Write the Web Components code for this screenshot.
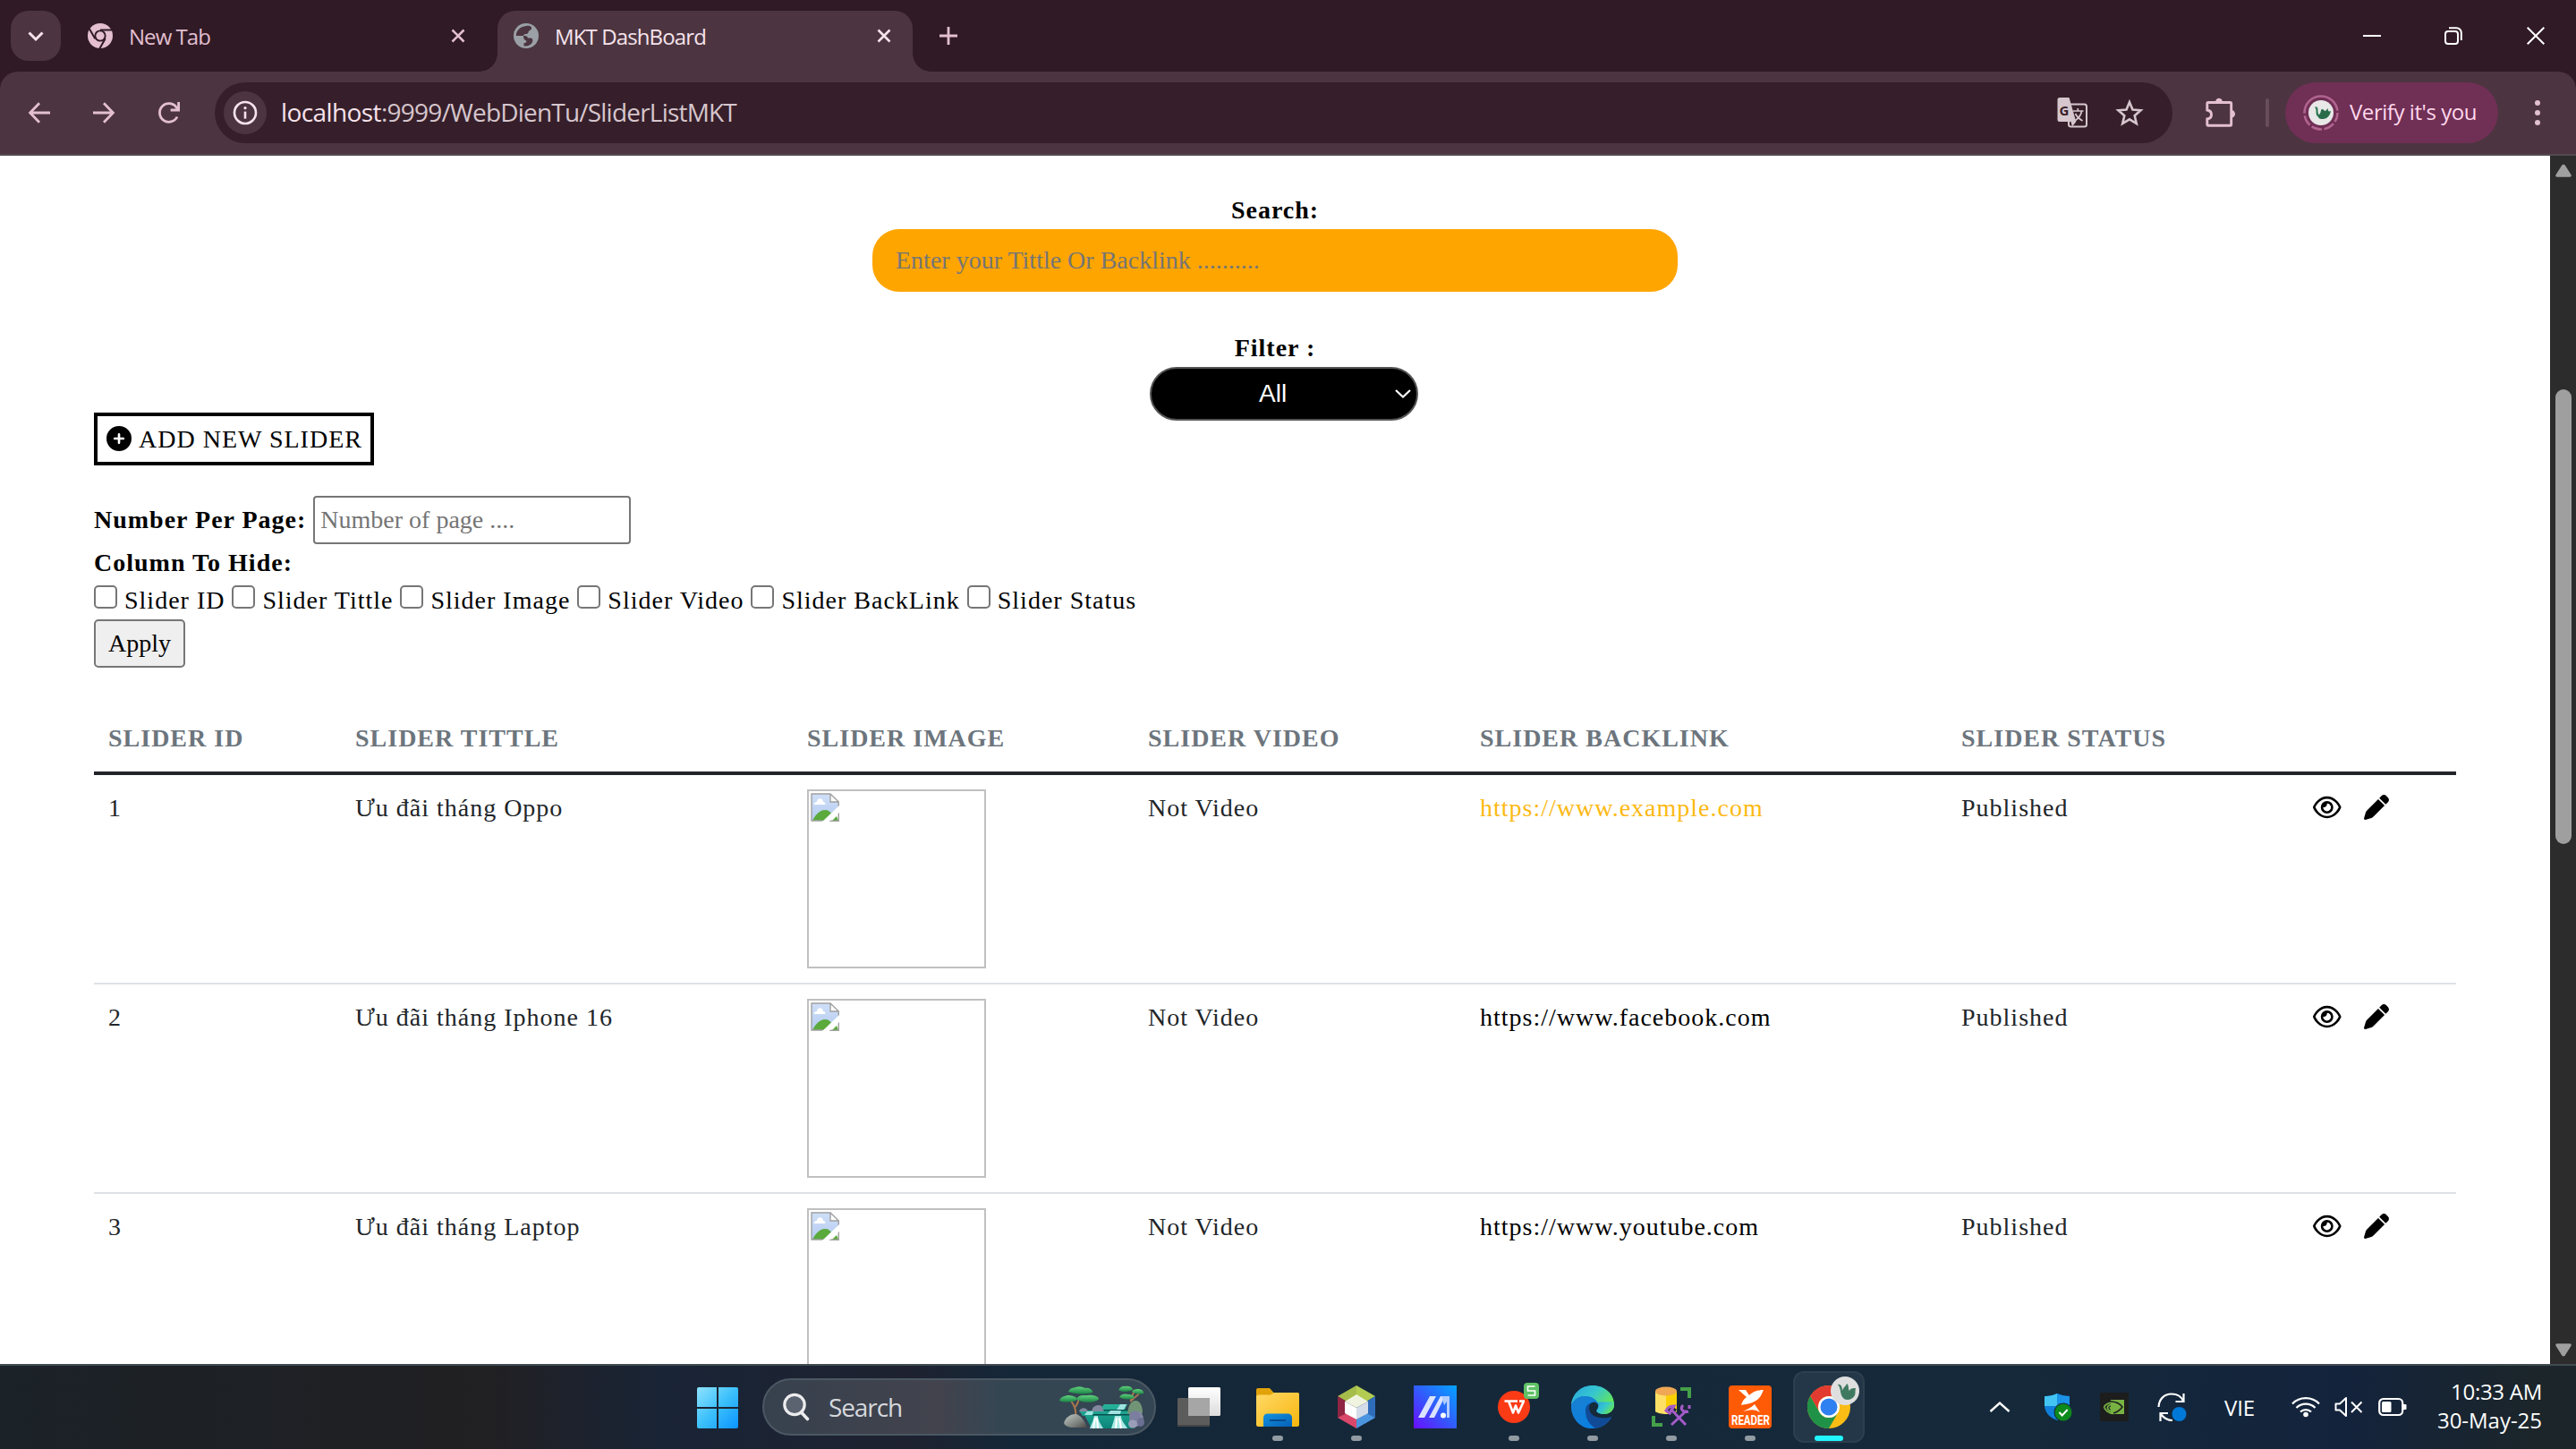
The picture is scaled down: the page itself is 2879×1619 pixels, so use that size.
<!DOCTYPE html>
<html lang="vi">
<head>
<meta charset="utf-8">
<title>MKT DashBoard</title>
<style>
html,body{margin:0;height:100%;overflow:hidden;background:#fff}
body{font-family:"Open Sans","Noto Sans",sans-serif}
</style>
</head>
<body>
<desktop-screen></desktop-screen>
<script>
const define = (tag, html, setup) => {
  const tpl = document.createElement('template');
  tpl.innerHTML = html;
  customElements.define(tag, class extends HTMLElement {
    constructor() {
      super();
      this.attachShadow({mode: 'open'}).appendChild(tpl.content.cloneNode(true));
    }
    connectedCallback() { if (setup) setup.call(this, this.shadowRoot); }
  });
};

/* Single line label; "w" is the advance the letters are tracked to. */
define('ui-text', `<style>:host{display:block;white-space:pre;flex:none}span{display:inline-block}</style><span><slot></slot></span>`, function (root) {
  const w = +this.getAttribute('w');
  if (!w) return;
  const s = root.querySelector('span');
  const n = this.textContent.length;
  const nat = s.getBoundingClientRect().width;
  s.style.letterSpacing = ((w - nat) / n).toFixed(3) + 'px';
});

const ICONS = {
  chevDown: [56,56,'<path d="M20.500 24.500l7.500 7.500 7.500-7.500" fill="none" stroke="#f6e3ec" stroke-width="3"/>'],
  chromeMono: [28,28,'<circle cx="14" cy="14" r="14" fill="#e3bfd0"/><circle cx="14" cy="14" r="6.6" fill="#301a25"/><circle cx="14" cy="14" r="4.7" fill="#e3bfd0"/><path d="M14 7.4H27M8.3 17.3L1.8 6M19.7 17.3L13.2 28.5" stroke="#301a25" stroke-width="2"/>'],
  globe: [28,28,'<circle cx="14" cy="14" r="14" fill="#9aa0a6"/><path d="M14 3c3-.5 5 .2 6 1.500.5 2-1 3.500-3 4-.5 1.500-.5 3-2.500 3.500-2 0-3.500.5-3.500 2H2.800C2.800 8.500 7 3.500 14 3zM11 14c3 0 4.500.5 5 2.500h3.500c2 .5 2.500 3 1 5.500-2 3-5.500 3.800-9 3.200v-3c2 0 3-1 3-2.500-2-.5-3.500-2-3.500-5.700z" fill="#4c3540"/>'],
  x: [16,16,'<path d="M1.500 1.500l13 13M14.500 1.500l-13 13" stroke="currentColor" stroke-width="2.600" fill="none"/>'],
  plus: [20,20,'<path d="M10 0v20M0 10h20" stroke="#e3bfd0" stroke-width="2.800"/>'],
  back: [24,24,'<path d="M12 1.200L1.600 12 12 22.800M1.600 12H24" stroke="#e3bfd0" stroke-width="2.800" fill="none"/>'],
  fwd: [24,24,'<path d="M12 1.200L22.400 12 12 22.800M22.400 12H0" stroke="#e3bfd0" stroke-width="2.800" fill="none"/>'],
  reload: [26,26,'<path d="M22 17.500A10.300 10.300 0 1 1 21.300 7.200L23 9.300M23.600 1v9h-9" stroke="#e3bfd0" stroke-width="2.800" fill="none"/>'],
  info: [28,28,'<circle cx="14" cy="14" r="12" stroke="#f6e3ec" stroke-width="2.600" fill="none"/><path d="M14 12.600v8" stroke="#f6e3ec" stroke-width="2.600"/><circle cx="14" cy="8.700" r="1.600" fill="#f6e3ec"/>'],
  translate: [34,34,'<rect x="13" y="7.500" width="20" height="25" rx="2.500" fill="none" stroke="#d6c6cd" stroke-width="2"/><path d="M3 0h10.500l7.800 27H3a2.500 2.500 0 0 1-2.500-2.500V2.500A2.500 2.500 0 0 1 3 0z" fill="#d6c6cd"/><path d="M15.500 27h5.800l-4.300 5.500z" fill="#d6c6cd"/><text x="2.500" y="19.500" font-family="Open Sans" font-weight="700" font-size="15" fill="#361f2a">G</text><path d="M18 15h11.500M23.300 12v3M27.500 15.500c-1 4.500-4 8-7.500 10.500M20.500 18c1.500 3 4.500 6 8 8" stroke="#d6c6cd" stroke-width="1.700" fill="none"/>'],
  star: [32,30,'<path d="M16 3.200l3.500 8.300 9 .8-6.800 5.900 2.100 8.800L16 22.300 8.200 27l2.100-8.800-6.800-5.900 9-.8z" fill="none" stroke="#d6c6cd" stroke-width="2.600"/>'],
  puzzle: [34,34,'<path d="M3 5.500h24.500a1.200 1.200 0 0 1 1.200 1.200V30a1.200 1.200 0 0 1-1.200 1.200H3A1.200 1.200 0 0 1 1.800 30v-6c2.800-.3 4.700-2.300 4.700-4.900S4.600 14.400 1.800 14V6.700A1.200 1.200 0 0 1 3 5.500z" fill="none" stroke="#e3bfd0" stroke-width="2.900"/><path d="M11 5a4 4.300 0 0 1 8 0zM29 14a4 4.300 0 0 1 0 8.600z" fill="#e3bfd0"/>'],
  avatar: [40,40,'<circle cx="20" cy="20" r="18.500" fill="none" stroke="#b0648f" stroke-width="2.600" stroke-dasharray="10.600 2.600 12 2.600 12 2.600 12 2.600 56 3"/><circle cx="20" cy="20" r="14" fill="#e8e8e8"/><path d="M13 14c2-2 4 0 3.500 4 0 3 1.500 5 3 6-3 2-5-1-5-4s0-5-1.500-6z" fill="#2f7d57"/><path d="M17 25c0-3 3-4 3-8 1-2 3-1 4 1 2 0 2-2 4-3-1 3 1 4 3 3-1 6-5 9-9 9-2 0-4 0-5-2z" fill="#2a6b4a"/>'],
  dots: [8,28,'<g fill="#e3bfd0"><circle cx="4" cy="3" r="3"/><circle cx="4" cy="14" r="3"/><circle cx="4" cy="25" r="3"/></g>'],
  min: [20,20,'<path d="M0 10h20" stroke="#fff" stroke-width="2"/>'],
  restore: [20,20,'<rect x="1" y="5" width="14" height="14" rx="3" fill="none" stroke="#fff" stroke-width="2"/><path d="M5 1.200h8.500a5.300 5.300 0 0 1 5.300 5.300V15" fill="none" stroke="#fff" stroke-width="2"/>'],
  close: [20,20,'<path d="M.7.700l18.600 18.600M19.300.700L.7 19.300" stroke="#fff" stroke-width="2"/>'],
  circlePlus: [28,28,'<path transform="scale(.0546875)" d="M256 512A256 256 0 1 0 256 0a256 256 0 1 0 0 512zM232 344V280H168c-13.300 0-24-10.700-24-24s10.700-24 24-24h64V168c0-13.300 10.700-24 24-24s24 10.700 24 24v64h64c13.300 0 24 10.700 24 24s-10.700 24-24 24H280v64c0 13.300-10.700 24-24 24s-24-10.700-24-24z"/>'],
  eye: [31.5,28,'<path transform="scale(.0546875)" d="M288 80c-65.200 0-118.800 29.600-159.900 67.700C89.600 183.500 63 226 49.400 256c13.600 30 40.200 72.500 78.600 108.300C169.200 402.400 222.800 432 288 432s118.800-29.600 159.900-67.700C486.400 328.500 513 286 526.600 256c-13.600-30-40.200-72.500-78.600-108.300C406.800 109.600 353.200 80 288 80zM95.400 112.600C142.500 68.800 207.200 32 288 32s145.500 36.800 192.600 80.600c46.800 43.500 78.100 95.400 93 131.100c3.300 7.900 3.300 16.700 0 24.600c-14.900 35.700-46.200 87.700-93 131.100C433.500 443.200 368.800 480 288 480s-145.500-36.800-192.600-80.600C48.600 356 17.300 304 2.500 268.300c-3.300-7.900-3.300-16.700 0-24.600C17.300 208 48.600 156 95.400 112.600zM288 336c44.200 0 80-35.800 80-80s-35.800-80-80-80c-.7 0-1.300 0-2 0c1.300 5.100 2 10.500 2 16c0 35.300-28.700 64-64 64c-5.500 0-10.900-.7-16-2c0 .7 0 1.300 0 2c0 44.200 35.800 80 80 80zm0-208a128 128 0 1 1 0 256 128 128 0 1 1 0-256z"/>'],
  pen: [28,28,'<path transform="scale(.0546875)" d="M362.700 19.300L314.300 67.700 444.300 197.700l48.400-48.400c25-25 25-65.500 0-90.500L453.300 19.300c-25-25-65.500-25-90.500 0zm-71 71L58.600 323.500c-10.400 10.400-18 23.300-22.200 37.400L1 481.200C-1.500 489.700 .8 498.800 7 505s15.300 8.500 23.700 6.100l120.300-35.400c14.100-4.200 27-11.800 37.400-22.200L421.700 220.300 291.700 90.300z"/>'],
  broken: [32,32,'<defs><linearGradient id="s" x2="0" y2="1"><stop stop-color="#cfdff8"/><stop offset="1" stop-color="#b5cbf0"/></linearGradient></defs><path d="M1 1h21l9 9v12L19 31H1z" fill="url(#s)"/><path d="M2 31c3-6 8-12 14-12 4 0 6 2 8 5l-7 7z" fill="#5aaa3c"/><path d="M24 31l5-5 2 5z" fill="#5aaa3c"/><path d="M3.500 13c0-2 2-3 3.500-3 0-5 7-5 7 0 2 0 3 1.500 2 3z" fill="#fff"/><path d="M22 1v9h9z" fill="#fff"/><path d="M13.500 31H1V1h21l9.300 9v6M22 1v9h9M31.300 22v9.300H20" fill="none" stroke="#a0a0a0" stroke-width="1.400"/><path d="M12.500 32.500L32 14v8L20 32.500z" fill="#fff"/>'],
  selArrow: [18,10,'<path d="M1 1l8 7.600L17 1" stroke="#fff" stroke-width="2.200" fill="none"/>'],
  up: [18,15,'<path d="M7.300 1.600a2 2 0 0 1 3.400 0l6.800 10.700a1.600 1.600 0 0 1-1.400 2.500H1.900a1.600 1.600 0 0 1-1.400-2.500z" fill="#9f9f9f"/>'],
  down: [18,15,'<path transform="rotate(180 9 7.500)" d="M7.300 1.600a2 2 0 0 1 3.400 0l6.800 10.700a1.600 1.600 0 0 1-1.400 2.500H1.900a1.600 1.600 0 0 1-1.400-2.500z" fill="#9f9f9f"/>'],
  windows: [46,46,'<defs><linearGradient id="w" gradientUnits="userSpaceOnUse" x2="46" y2="46"><stop stop-color="#8fe2ff"/><stop offset=".5" stop-color="#3cc0fb"/><stop offset="1" stop-color="#0a94ff"/></linearGradient></defs><path d="M2 0h20v22H0V2a2 2 0 0 1 2-2zM24 0h20a2 2 0 0 1 2 2v20H24zM0 24h22v22H2a2 2 0 0 1-2-2zM24 24h22v20a2 2 0 0 1-2 2H24z" fill="url(#w)"/>'],
  search: [30,32,'<circle cx="13" cy="13.500" r="11.200" fill="#5b6270" stroke="#ececee" stroke-width="3.200"/><path d="M20.500 22l7 7.500" stroke="#ececee" stroke-width="3.600" stroke-linecap="round"/>'],
  falls: [96,48,`<defs><linearGradient id="g" x2="0" y2="1"><stop stop-color="#5fd27c"/><stop offset="1" stop-color="#1d8548"/></linearGradient><linearGradient id="r" x2="1" y2="1"><stop stop-color="#c3c9c4"/><stop offset=".6" stop-color="#7d8480"/><stop offset="1" stop-color="#4b4644"/></linearGradient><linearGradient id="t" x2="0" y2="1"><stop stop-color="#27b39b"/><stop offset="1" stop-color="#0b8579"/></linearGradient></defs>
  <path d="M18 34C19 26 16 22 13 17M18 24c2-3 3-5 4-10M80 18c-1-5 4-8 3-13M80 18c1-3 6-5 9-9" stroke="#a9774c" stroke-width="2" fill="none"/>
  <path d="M50 21h26l-3 6H45zM22 28h60l4 6H26zM28 33h56v15H36z" fill="url(#t)"/><path d="M48 27h30l4 1.500H44zM38 32h44v1.500H36z" fill="#064f4e"/>
  <path d="M39 34c-1 6-4 10-5 14h15c-2-4-6-8-6-14zM62 34c-1 6-3 10-4 14h18c-2-4-7-8-7-14z" fill="#a9e9e6"/><path d="M68 21l-4 6h8l3-6zM31 29l-3 4h9l1-4zM57 28l-3 4h14l1-4z" fill="#9fe3e0"/><path d="M40 36l-2 12M42 36l1 12M64 36l-1 12M67 36l2 12" stroke="#fff" stroke-width="2"/>
  <path d="M36 29c1-5 4-7 8-7s4 3 6 7zM22 29c1-4 8-6 10 0z" fill="#8188a0"/><path d="M5 42c2-7 8-10 13-10 6 1 10 7 13 15H13c-4-1-7-2-8-5z" fill="url(#r)"/><path d="M76 32c1-11 5-16 10-15s7 7 7 14z" fill="#709475"/><path d="M78 41c0-8 5-12 9-12 6 0 7 6 7 11-2 6-9 7-14 5z" fill="#8587a6"/><ellipse cx="84" cy="34" rx="6" ry="5.500" fill="#7b7e9f"/><ellipse cx="82" cy="43" rx="5" ry="4.500" fill="#9a9db7"/><ellipse cx="91" cy="41" rx="4" ry="5" fill="#6b6f92"/>
  <g fill="url(#g)"><path d="M10 7c2-5 6-4 8-5 5-2 9 0 11 1 5-1 9 3 8 5-6 2-20 2-27-1z"/><path d="M0 17c2-5 6-5 9-6 5 0 9 1 11 4 0 3-14 5-20 2z"/><path d="M19 15c3-5 8-4 12-4 8-1 13 2 13 4-3 5-20 5-25 0z"/><path d="M66 5c2-4 6-5 8-4 5-1 8 2 8 4-4 2-12 3-16 0z"/><path d="M67 13c2-4 7-4 10-3 4 0 7 2 7 4-5 2-13 2-17-1z"/><path d="M81 7c2-3 5-3 7-3 4 0 7 3 6 5-4 1-9 1-13-2z"/></g>`],
  taskview: [48,44,'<defs><linearGradient id="a" x2="0" y2="1"><stop stop-color="#fff"/><stop offset="1" stop-color="#dcdcdc"/></linearGradient></defs><rect x="12" width="36" height="32" rx="1.500" fill="url(#a)"/><rect y="12" width="36" height="32" rx="1.500" fill="#5d5c5c"/><path d="M12 12h24v20H12z" fill="#a6a6a6"/><path d="M0 42h36v.5a1.500 1.500 0 0 1-1.500 1.500h-33A1.500 1.500 0 0 1 0 42.500z" fill="#464646"/>'],
  folder: [48,44,'<defs><linearGradient id="f" x2="1" y2="1"><stop stop-color="#ffd968"/><stop offset="1" stop-color="#f8b60d"/></linearGradient><linearGradient id="b" x2="1" y2="1"><stop stop-color="#1492e0"/><stop offset="1" stop-color="#0560b5"/></linearGradient></defs><path d="M0 10V3a2 2 0 0 1 2-2h13l4.500 5H46a2 2 0 0 1 2 2v4H0z" fill="#e2a20a"/><path d="M0 11a2.500 2.500 0 0 1 2.500-2.500H16L20 6h26a2 2 0 0 1 2 2v33.500a2.500 2.500 0 0 1-2.500 2.500h-43A2.500 2.500 0 0 1 0 41.500z" fill="url(#f)"/><path d="M8 44V34a4.500 4.500 0 0 1 4.500-4.500h23A4.500 4.500 0 0 1 40 34v10z" fill="url(#b)"/><path d="M15 37h18" stroke="#064a8d" stroke-width="2"/>'],
  netbeans: [42,48,'<path d="M21 0l21 12-10 6-11-7z" fill="#b4cc52"/><path d="M21 0L0 12l10 6 11-7z" fill="#a5bd4b"/><path d="M0 12l10 6v14L0 36z" fill="#8f2443"/><path d="M42 12l-10 6v14l10 4z" fill="#2f6cba"/><path d="M0 36l10-5 11 7v10z" fill="#d9476a"/><path d="M42 36l-10-5-11 7v10z" fill="#4c95e0"/><path d="M21 10l13 8-13 7-13-7z" fill="#eff3e0"/><path d="M8 18l13 7v13L8 31z" fill="#fff"/><path d="M34 18l-13 7v13l13-7z" fill="#d3dce8"/>'],
  ma: [48,48,'<defs><linearGradient id="m" x1="0" y1="1" x2="1" y2="0"><stop stop-color="#6a0dff"/><stop offset=".5" stop-color="#315cfc"/><stop offset="1" stop-color="#04a4ff"/></linearGradient></defs><rect width="48" height="48" fill="url(#m)"/><path d="M5 36L18 12h7L12 36zM17 36l13-24h5L23 36z" fill="#dbe4ff"/><path d="M31 12h9v24h-3V18l-3 4z" fill="#b4cdff"/><circle cx="33" cy="33.500" r="3" fill="#fff"/>'],
  wps: [48,48,'<g transform="translate(4 -7)"><circle cx="20" cy="31" r="18" fill="#fb3a16"/><path d="M9.500 24.500h4.500l5 13 3-8 3 8 6-13M14 24.500h10M26 24.500h6" fill="none" stroke="#fff" stroke-width="2.600" stroke-linejoin="round"/><rect x="31" y="4" width="17" height="18" rx="4" fill="#5fc265"/><path d="M43.500 8h-8v5h8v5h-8" fill="none" stroke="#fff" stroke-width="1.700"/></g>'],
  edge: [48,48,'<defs><linearGradient id="e" x1="0" y1="0" x2="1" y2=".6"><stop stop-color="#2aa6df"/><stop offset=".5" stop-color="#35c6cf"/><stop offset="1" stop-color="#68e94d"/></linearGradient><linearGradient id="d" x2=".6" y2="1"><stop stop-color="#1a80cf"/><stop offset="1" stop-color="#0a7fe0"/></linearGradient></defs><circle cx="24" cy="24" r="24" fill="#0c7bd4"/><path d="M0 22C1 9 11 0 24 0s24 9 24 21c0 7-5 11-11 11-5 0-9-2-8-4 2-2 2-4 2-6-2-6-8-10-15-10S4 15 0 22z" fill="url(#e)"/><path d="M0 22c3-7 9-10 15-10 8 0 14 5 15 11l-7-4c-5 1-8 5-7 11 1 8 5 14 12 17-3 1-5 1-7 1C9 47 0 36 0 22z" fill="url(#d)"/><path d="M16 28c0-5 3-8 8-9-2 10 6 18 20 16 1 0 1 1 0 2-4 6-10 10-17 11-6-4-11-10-11-20z" fill="#114b97"/><path d="M28.500 27.500c1-1 2-3 1.500-6-1-2-3-3-5-3-4 1-6 5-4.500 9.500 2 7 12 10 23.500 7.500l4-1V24C46 29 42 32 37 32c-5 0-10-2-8.500-4.500z" fill="#152a3a"/><path d="M28.500 27.500c2-2 3-6 1.500-9h18V21c0 7-5 11-11 11-5 0-9-2-8.500-4.500z" fill="url(#e)"/>'],
  db: [46,46,'<path d="M33 1h12v12h-4V5h-8zM1 33v12h12v-4H5v-8z" fill="#45a049"/><path d="M5 6h24v22c-3 4-20 4-24 0z" fill="#ffe066"/><path d="M17 6h12v20l-8 4h-4z" fill="#fcd000"/><ellipse cx="17" cy="5.500" rx="12" ry="5" fill="#f0a854"/><path d="M18 27l5-6 6 5-4 6zM36 20a6 6 0 0 0 6 7" fill="#1b2636"/><path d="M22 25l17 18M40 27L23 43" stroke="#a45bc9" stroke-width="3"/><path d="M17 27c3-5 6-5 9-5l-5 8zM36 21c-4 4 0 9 6 7M43 21v4" stroke="#a45bc9" stroke-width="3" fill="none"/>'],
  reader: [48,48,'<rect width="48" height="48" rx="4" fill="#ff5a05"/><path d="M11 5h8l4 6c4-4 9-6 16-6-2 4-3 8-7 11-5 4-13 5-18 6 1-4 3-7 6-9zM29 21l6 9-4-2c-5-2-11 0-15 1 4-2 9-4 13-8z" fill="#fff"/><text x="3" y="43.500" font-family="Roboto" font-weight="700" font-size="15.500" textLength="43" lengthAdjust="spacingAndGlyphs" fill="#fff">READER</text>'],
  chrome: [48,48,'<circle cx="24" cy="24" r="24" fill="#fbbc15"/><path d="M3.200 12A24 24 0 0 1 44.800 12H24a12 12 0 0 0-10.400 18z" fill="#e23c31"/><path d="M3.200 12A24 24 0 0 0 24 48l10.400-18a12 12 0 0 1-20.800 0z" fill="#1f9248"/><circle cx="24" cy="24" r="12" fill="#fff"/><circle cx="24" cy="24" r="9.500" fill="#2f80f0"/>'],
  badge: [32,32,'<circle cx="16" cy="16" r="16" fill="#dfdfdf"/><path d="M8 9c4-1 5 4 5 7 1-4 4-5 5-8 3 2 1 6 3 8 1-3 4-3 7-3-1 3 0 5-1 8-3 6-11 6-13 3-4-4-2-11-6-15z" fill="#3f7a60"/>'],
  caret: [24,12,'<path d="M1.500 11L12 1.500 22.500 11" stroke="#fff" stroke-width="2.400" fill="none"/>'],
  shield: [32,32,'<path d="M14 1c4 2 9 3 14 3v10c0 8-6 14-14 17C6 28 0 22 0 14V4c5 0 10-1 14-3z" fill="#0f7fdb"/><path d="M14 1v14H0V4c5 0 10-1 14-3z" fill="#42c5f3"/><path d="M14 1c4 2 9 3 14 3v11H14z" fill="#1b93e8"/><circle cx="21" cy="22" r="10.500" fill="#152a3c"/><circle cx="21" cy="22" r="9.500" fill="#0d8a1c"/><path d="M16.500 22l3.200 3.500 6-6.500" stroke="#fff" stroke-width="2" fill="none"/>'],
  nvidia: [32,32,'<rect width="32" height="32" fill="#1d1d1d"/><path d="M12 8h15v16H12z" fill="#77b243"/><path d="M4.500 16c4-6 14-7 19 0-3 6-12 7-15 2-1-4 6-7 10-3-1 4-6 4-7 2 2-2 3-2 4-1M4.500 16c3 7 10 9 15 6" stroke="#77b243" stroke-width="1.800" fill="none"/><path d="M12 10c5 0 10 2 13 6-3 4-6 6-10 7" stroke="#1d1d1d" stroke-width="1.500" fill="none"/>'],
  sync: [34,32,'<path d="M1.500 16C2 7 8 1.500 16 1.500c6 0 11 3 13 8M29.500 1v9h-9M12 23H3.500v9M4 24c3 4 7 7 13 7" stroke="#fff" stroke-width="2.200" fill="none"/><circle cx="24.500" cy="24" r="8" fill="#0078d7"/>'],
  wifi: [32,24,'<g fill="none" stroke="#fff" stroke-width="2.300"><path d="M1 8.500a21 21 0 0 1 30 0M5.500 13a15 15 0 0 1 21 0M10 17.500a8.700 8.700 0 0 1 12 0"/></g><circle cx="16" cy="20.500" r="2.800" fill="#fff"/>'],
  mute: [32,24,'<path d="M1.500 8.500h4.500L13 2v20l-7-6.500H1.500z" stroke="#fff" stroke-width="2" stroke-linejoin="round" fill="none"/><path d="M19 6.500l11.500 11.500M30.500 6.500L19 18" stroke="#fff" stroke-width="2"/>'],
  battery: [32,22,'<rect x="1.200" y="2" width="26" height="18" rx="4.500" fill="none" stroke="#fff" stroke-width="2.200"/><rect x="4" y="5" width="10.500" height="12" rx="1.500" fill="#fff"/><path d="M28 8h2.500a1 1 0 0 1 1 1v4a1 1 0 0 1-1 1H28z" fill="#fff"/>']
};
define('ui-icon', `<style>:host{display:block;flex:none}svg{display:block;overflow:visible}</style><div></div>`, function (root) {
  const [w, h, body] = ICONS[this.getAttribute('name')];
  root.querySelector('div').innerHTML = `<svg width="${w}" height="${h}" viewBox="0 0 ${w} ${h}">${body}</svg>`;
});

define('browser-tabs', `<style>
:host{display:flex;height:80px;background:#301a25;align-items:flex-start;box-sizing:border-box;padding:12px 35px 0 12px;color:#e3bfd0;font-size:24px;line-height:56px}
.drop{width:56px;height:56px;border-radius:20px;background:#4c3540;flex:none}
.tab{display:flex;align-items:center;box-sizing:border-box;flex:none;height:56px}
.one{width:488px;padding:0 36px 0 30px}
.two{width:464px;height:68px;padding:0 24px 12px 18px;background:#4c3540;border-radius:20px 20px 0 0;color:#f6e3ec;position:relative}
.two::before,.two::after{content:"";position:absolute;bottom:0;width:20px;height:20px}
.two::before{left:-20px;background:radial-gradient(circle at 0 0,#0000 19.500px,#4c3540 20px)}
.two::after{right:-20px;background:radial-gradient(circle at 100% 0,#0000 19.500px,#4c3540 20px)}
ui-text{margin:2px auto 0 18px}
.plus{margin:18px auto 0 30px}
.win{display:flex;gap:72px;padding-top:18px}
.win :first-child{margin-right:-1px}
</style>
<ui-icon class="drop" name="chevDown"></ui-icon>
<div class="tab one"><ui-icon name="chromeMono"></ui-icon><ui-text w="91">New Tab</ui-text><ui-icon name="x"></ui-icon></div>
<div class="tab two"><ui-icon name="globe"></ui-icon><ui-text w="169">MKT DashBoard</ui-text><ui-icon name="x"></ui-icon></div>
<ui-icon class="plus" name="plus"></ui-icon>
<div class="win"><ui-icon name="min"></ui-icon><ui-icon name="restore"></ui-icon><ui-icon name="close"></ui-icon></div>`);

define('browser-toolbar', `<style>
:host{display:block;height:94px;background:#301a25}
.bar{display:flex;align-items:center;height:94px;box-sizing:border-box;border-bottom:2px solid #534a50;background:#4c3540;border-radius:20px 20px 0 0;padding:0 39px 0 32px}
.nav{display:flex;gap:48px;align-items:center;width:208px}
.omni{flex:none;display:flex;align-items:center;box-sizing:border-box;width:2188px;height:68px;border-radius:34px;background:#361f2a;padding:0 32px 0 10px;color:#f6e3ec;font-size:28px;line-height:60px}
.info{width:48px;height:48px;border-radius:24px;background:#4c3540;display:grid;place-items:center}
.omni ui-text{margin:-2px 0 0 16px}
.omni .path{color:#d6c6cd;margin:-2px auto 0 0}
.tr{margin-right:31px}
.pz{margin-left:37px}
.sep{width:4px;height:32px;border-radius:2px;background:#694d5b;margin:0 18px 0 33px}
.pill{display:flex;align-items:center;width:238px;height:68px;border-radius:34px;background:#702f55;color:#ffd8ec;font-size:24px;line-height:60px;box-sizing:border-box;padding-left:20px;margin-right:40px}
.pill ui-text{margin:-2px 0 0 12px}
</style>
<div class="bar"><div class="nav"><ui-icon name="back"></ui-icon><ui-icon name="fwd"></ui-icon><ui-icon name="reload"></ui-icon></div>
<div class="omni"><div class="info"><ui-icon name="info"></ui-icon></div><ui-text w="112">localhost</ui-text><ui-text class="path" w="397">:9999/WebDienTu/SliderListMKT</ui-text><ui-icon class="tr" name="translate"></ui-icon><ui-icon name="star"></ui-icon></div>
<ui-icon class="pz" name="puzzle"></ui-icon><div class="sep"></div>
<div class="pill"><ui-icon name="avatar"></ui-icon><ui-text w="142">Verify it's you</ui-text></div><ui-icon name="dots"></ui-icon></div>`);

define('slider-row', `<style>
:host{display:grid;grid-template-columns:276px 505px 381px 371px 538px 393px 176px;height:234px;box-sizing:border-box;border-bottom:2px solid #dee2e6;padding-top:16px;color:#212529;line-height:42px}
div{padding-left:16px;white-space:pre}
.img{box-sizing:border-box;width:200px;height:200px;border:2px solid silver;padding:2px;margin-left:16px}
.act{display:flex;gap:25.500px;padding-top:5.500px}
:host([hot]) .link{color:#fdb913}.link{color:#000}
</style><div><slot name="id"></slot></div><div><slot name="title"></slot></div><div class="img"><ui-icon name="broken"></ui-icon></div><div>Not Video</div><div class="link"><slot name="link"></slot></div><div>Published</div><div class="act"><ui-icon name="eye"></ui-icon><ui-icon name="pen"></ui-icon></div>`);

define('slider-table', `<style>
:host{display:block;width:2640px}
.head{display:grid;grid-template-columns:276px 505px 381px 371px 538px 393px 176px;border-bottom:4px solid #212529;color:#6c757d;font-weight:700;line-height:42px}
.head div{padding:16px;white-space:pre}
</style><div class="head"><div>SLIDER ID</div><div>SLIDER TITTLE</div><div>SLIDER IMAGE</div><div>SLIDER VIDEO</div><div>SLIDER BACKLINK</div><div>SLIDER STATUS</div><div></div></div>
<slider-row hot><span slot="id">1</span><span slot="title">Ưu đãi tháng Oppo</span><span slot="link">https://www.example.com</span></slider-row>
<slider-row><span slot="id">2</span><span slot="title">Ưu đãi tháng Iphone 16</span><span slot="link">https://www.facebook.com</span></slider-row>
<slider-row><span slot="id">3</span><span slot="title">Ưu đãi tháng Laptop</span><span slot="link">https://www.youtube.com</span></slider-row>`);

define('check-item', `<style>:host{display:flex;gap:8px;height:42px;white-space:pre}i{box-sizing:border-box;width:26px;height:26px;border:2px solid #767676;border-radius:5px;margin-top:4px;background:#fff}</style><i></i><slot></slot>`);

define('slider-page', `<style>
:host{display:flex;flex-direction:column;align-items:flex-start;box-sizing:border-box;width:2850px;height:1350px;overflow:hidden;background:#fff;color:#000;padding:40px 105px 0;font:28px/42px "Liberation Serif","Times New Roman",serif;letter-spacing:1px}
:host>*{flex:none}
.mid{align-self:center;font-weight:700}
.search{align-self:center;box-sizing:border-box;width:900px;height:70px;border-radius:30px;background:orange;color:#757575;letter-spacing:0;line-height:70px;padding-left:26px;margin-bottom:42px}
.sel{align-self:center;display:flex;align-items:center;box-sizing:border-box;width:300px;height:60px;margin-left:20px;border:2px solid #555;border-radius:30px;background:#000;color:#fff;font:28px/56px "Liberation Sans",Arial,sans-serif;letter-spacing:0;padding:0 6px 0 120px;justify-content:space-between}
.add{display:flex;align-items:center;box-sizing:border-box;height:59px;border:4px solid #000;margin-top:-9px;padding:0 10px;gap:8px;width:313px;white-space:pre;line-height:51px}
.add ui-icon{margin-top:-1px}
.num{display:flex;align-items:center;gap:8px;height:54px;margin-top:34px}
.num b{white-space:pre}
.inp{box-sizing:border-box;width:355px;height:54px;border:2px solid #767676;border-radius:4px;letter-spacing:0;color:#757575;padding-left:6px;line-height:50px}
.checks{display:flex;gap:8px;height:42px}
.apply{box-sizing:border-box;width:102px;height:54px;border:2px solid #767676;border-radius:5px;background:#efefef;letter-spacing:0;text-align:center;line-height:49px;margin-bottom:42px}
</style>
<div class="mid">Search:</div><div class="search">Enter your Tittle Or Backlink ..........</div>
<div class="mid">Filter :</div><div class="sel">All<ui-icon name="selArrow"></ui-icon></div>
<div class="add"><ui-icon name="circlePlus"></ui-icon>ADD NEW SLIDER</div>
<div class="num"><b>Number Per Page:</b><div class="inp">Number of page ....</div></div>
<b>Column To Hide:</b>
<div class="checks"><check-item>Slider ID</check-item><check-item>Slider Tittle</check-item><check-item>Slider Image</check-item><check-item>Slider Video</check-item><check-item>Slider BackLink</check-item><check-item>Slider Status</check-item></div>
<div class="apply">Apply</div>
<slider-table></slider-table>`);

define('scroll-bar', `<style>:host{display:flex;flex-direction:column;align-items:center;box-sizing:border-box;width:29px;height:1350px;background:#2c2c2c;padding:9px 0 8px}.thumb{width:18px;height:508px;border-radius:9px;background:#9f9f9f;margin:237px 0 auto}</style><ui-icon name="up"></ui-icon><div class="thumb"></div><ui-icon name="down"></ui-icon>`);

define('task-item', `<style>
:host{display:flex;flex-direction:column;align-items:center;justify-content:center;width:80px;height:80px;border-radius:12px;box-sizing:border-box;flex:none;position:relative}
:host([active]){background:#233748;border:2px solid #2c3f4f}
i{position:absolute;bottom:2px;width:12px;height:6px;border-radius:3px;background:#929aa2;display:none}
:host([run]) i{display:block}
:host([active]) i{display:block;width:32px;background:#22f6ff;bottom:0}
::slotted(.badge){position:absolute;left:40px;top:4px}
</style><slot></slot><i></i>`);

define('task-bar', `<style>
:host{display:flex;align-items:center;box-sizing:border-box;height:95px;border-top:2px solid #414b52;padding:0 38px 0 779px;background:linear-gradient(90deg,#1b2228 0,#212023 550px,#192436 740px,#1e2230 1020px,#142738 1130px,#15293a 2250px,#13233c 2620px,#1b252a 2830px);color:#fff;font-size:24px}
.search{display:flex;align-items:center;box-sizing:border-box;width:440px;height:64px;border-radius:32px;margin:-1px 8px 0 27px;padding:0 10px 0 21px;border:2px solid #4b5863;background:linear-gradient(90deg,#37414e,#42434d 45%,#354653 60%,#344553);font-size:28px;line-height:60px;color:#d5d8dc}
.search ui-text{margin:0 auto 0 21px}
.apps{display:flex;gap:8px;height:80px;margin-top:-1px}
.tray{display:flex;align-items:center;margin-left:auto;margin-top:-1px}
.clock{display:flex;flex-direction:column;align-items:flex-end;line-height:32px;margin:-3px 0 0 34px}
</style>
<ui-icon name="windows"></ui-icon>
<div class="search"><ui-icon name="search"></ui-icon><ui-text w="82">Search</ui-text><ui-icon name="falls"></ui-icon></div>
<div class="apps">
<task-item><ui-icon name="taskview"></ui-icon></task-item>
<task-item run><ui-icon name="folder"></ui-icon></task-item>
<task-item run><ui-icon name="netbeans"></ui-icon></task-item>
<task-item><ui-icon name="ma"></ui-icon></task-item>
<task-item run><ui-icon name="wps"></ui-icon></task-item>
<task-item run><ui-icon name="edge"></ui-icon></task-item>
<task-item run><ui-icon name="db"></ui-icon></task-item>
<task-item run><ui-icon name="reader"></ui-icon></task-item>
<task-item active><ui-icon name="chrome"></ui-icon><ui-icon class="badge" name="badge"></ui-icon></task-item>
</div>
<div class="tray">
<ui-icon name="caret"></ui-icon><ui-icon name="shield" style="margin-left:38px"></ui-icon><ui-icon name="nvidia" style="margin-left:30px"></ui-icon><ui-icon name="sync" style="margin-left:32px"></ui-icon>
<ui-text w="34" style="margin:0 41px 0 41px">VIE</ui-text>
<ui-icon name="wifi"></ui-icon><ui-icon name="mute" style="margin-left:16px"></ui-icon><ui-icon name="battery" style="margin-left:17px"></ui-icon>
<div class="clock"><ui-text w="102">10:33 AM</ui-text><ui-text w="117">30-May-25</ui-text></div>
</div>`);

define('desktop-screen', `<style>:host{display:flex;flex-direction:column;width:2879px;height:1619px;overflow:hidden}.view{display:flex}</style>
<browser-tabs></browser-tabs><browser-toolbar></browser-toolbar><div class="view"><slider-page></slider-page><scroll-bar></scroll-bar></div><task-bar></task-bar>`);
</script>
</body>
</html>
